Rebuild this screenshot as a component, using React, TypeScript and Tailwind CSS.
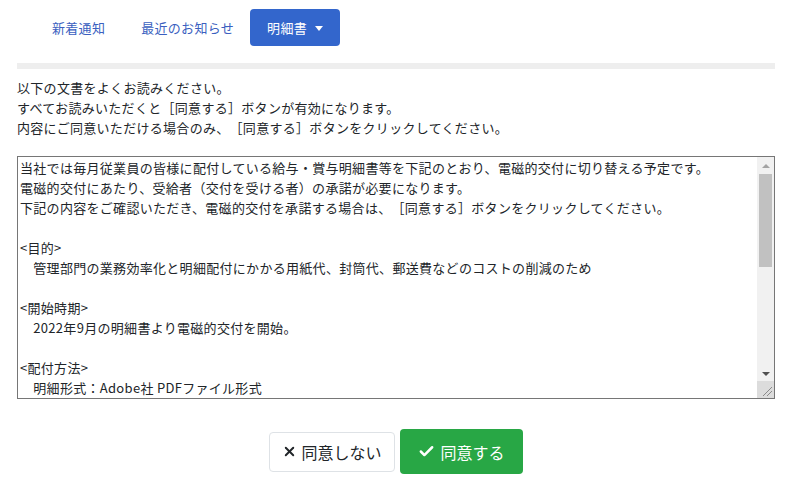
import { Check, X } from "lucide-react"

const FONT = "font-['Meiryo','Noto_Sans_CJK_JP','Noto_Sans',sans-serif]"

const terms = [
  "当社では毎月従業員の皆様に配付している給与・賞与明細書等を下記のとおり、電磁的交付に切り替える予定です。",
  "電磁的交付にあたり、受給者（交付を受ける者）の承諾が必要になります。",
  "下記の内容をご確認いただき、電磁的交付を承諾する場合は、［同意する］ボタンをクリックしてください。",
  "",
  "<目的>",
  "　管理部門の業務効率化と明細配付にかかる用紙代、封筒代、郵送費などのコストの削減のため",
  "",
  "<開始時期>",
  "　2022年9月の明細書より電磁的交付を開始。",
  "",
  "<配付方法>",
  "　明細形式：Adobe社 PDFファイル形式",
]

function Scrollbar() {
  return (
    <div className="flex w-[17px] shrink-0 flex-col bg-[#f1f1f1]">
      <div className="flex h-[17px] items-center justify-center">
        <span className="h-0 w-0 border-x-[4px] border-b-[4px] border-x-transparent border-b-[#a3a3a3]" />
      </div>
      <div className="flex-1">
        <div className="mx-[2px] h-[93px] bg-[#c1c1c1]" />
      </div>
      <div className="flex h-[17px] items-center justify-center pt-[3px]">
        <span className="h-0 w-0 border-x-[4px] border-t-[4px] border-x-transparent border-t-[#505050]" />
      </div>
      <div className="relative h-[17px] bg-[#dcdcdc]">
        <svg className="absolute inset-0" width="17" height="17" viewBox="0 0 17 17">
          <path d="M15 6 L6 15 M15 10 L10 15" stroke="#8a8a8a" strokeWidth="1" fill="none" />
        </svg>
      </div>
    </div>
  )
}

export default function App() {
  return (
    <div
      className={`${FONT} min-h-[494px] w-[792px] bg-white text-[13px] tracking-[0.3px] text-[#212529] [text-spacing-trim:space-all]`}
    >
      <nav className="flex items-center pl-[34px] pt-[9px]">
        <a className="px-[18px] leading-[37px] text-[#3b5fc0]">新着通知</a>
        <a className="px-[18px] leading-[37px] text-[#3b5fc0]">最近のお知らせ</a>
        <button
          type="button"
          className="ml-[-2px] flex h-[37px] w-[90px] items-center justify-center gap-[8px] rounded-[4px] bg-[#3366cc] text-white"
        >
          <span>明細書</span>
          <span className="mt-[1px] h-0 w-0 border-x-[4px] border-t-[5px] border-x-transparent border-t-white" />
        </button>
      </nav>

      <div className="mx-[17px] mt-[17px] h-[6px] bg-[#eeeeee]" />

      <div className="mt-[9px] px-[17px] leading-[20px]">
        <p>以下の文書をよくお読みください。</p>
        <p>すべてお読みいただくと［同意する］ボタンが有効になります。</p>
        <p>内容にご同意いただける場合のみ、［同意する］ボタンをクリックしてください。</p>
      </div>

      <div className="mx-[17px] mt-[18px] flex h-[243px] border border-[#767676]">
        <div className="flex-1 overflow-hidden px-[2px] pt-[1px] leading-[20px]">
          {terms.map((line, i) => (
            <div key={i} className="whitespace-pre">
              {line || "\u00a0"}
            </div>
          ))}
        </div>
        <Scrollbar />
      </div>

      <div className="mt-[30px] flex items-center justify-center gap-[5px] tracking-normal">
        <button
          type="button"
          className="flex h-[40px] w-[126px] items-center justify-center gap-[4px] rounded-[4px] border border-[#dee2e6] bg-white text-[16px] text-[#212529]"
        >
          <X className="h-[15px] w-[15px]" strokeWidth={3} />
          同意しない
        </button>
        <button
          type="button"
          className="flex h-[45px] w-[123px] items-center justify-center gap-[5px] rounded-[4px] bg-[#28a745] text-[16px] text-white"
        >
          <Check className="h-[17px] w-[17px]" strokeWidth={3.5} />
          同意する
        </button>
      </div>
    </div>
  )
}
